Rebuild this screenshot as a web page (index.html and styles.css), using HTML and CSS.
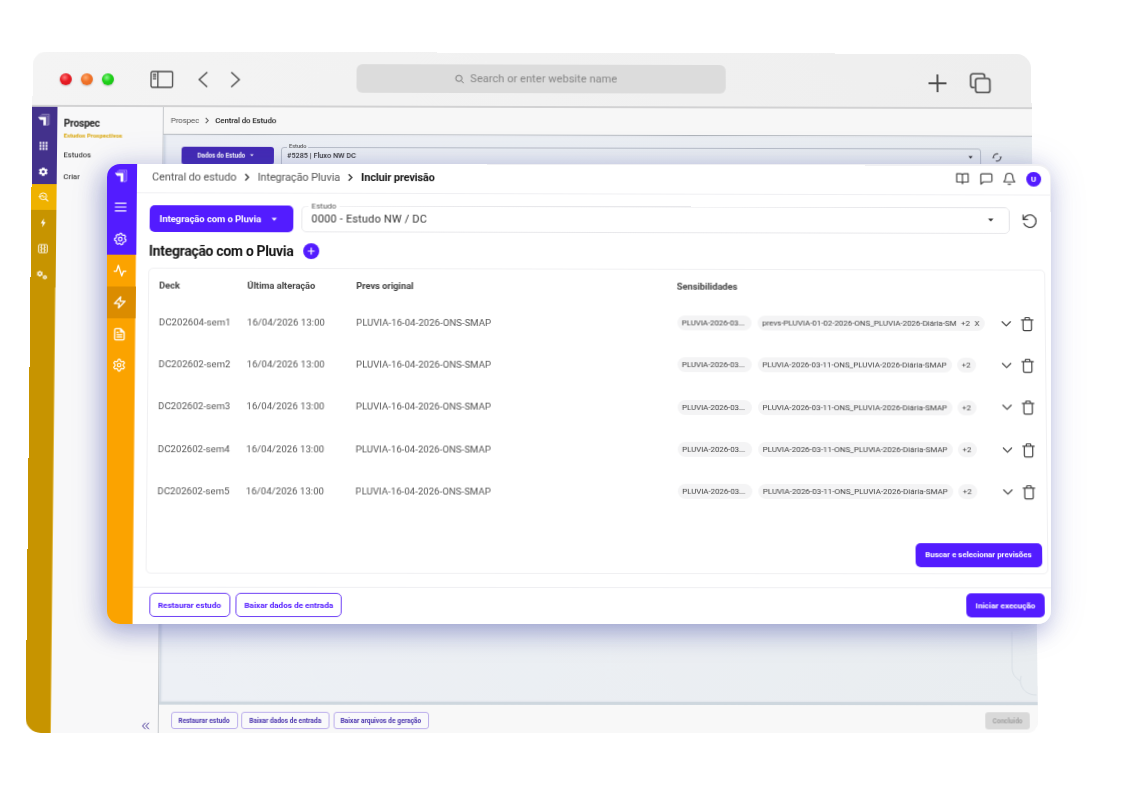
FILE: index.html
```html
<!DOCTYPE html>
<html lang="pt-BR">
<head>
<meta charset="utf-8">
<title>Prospec - Integração com o Pluvia</title>
<link rel="stylesheet" href="styles.css">
</head>
<body>
<svg class="defs" width="0" height="0" aria-hidden="true">
  <defs>
    <symbol id="logo" viewBox="0 0 14 14"><path d="M.8 3.400h8.700v9.200H6.600V6.600H3.200z" fill="#fff"/><path d="M2.800 2.100h8.200v10.100M4.600.8h8.200v10.800L10 12.600" fill="none" stroke="#fff" stroke-width=".6" opacity=".7"/></symbol>
    <symbol id="cog" viewBox="0 0 24 24"><path d="M12 2.200l2 .3.8 2.600 1.500.9 2.600-.7 1.900 2.500-1.200 2.400.1 1.700 2 1.800-1 3-2.700.4-1.200 1.200-.3 2.700-3 1-1.900-2h-1.700l-2.400 1.200-2.500-1.900.7-2.600-.8-1.500-2.600-.8v-3.100l2.500-1 .8-1.600-.6-2.600L7.600 4.200l2.300 1.200z" fill="none" stroke="currentColor" stroke-width="2" stroke-linejoin="round"/><circle cx="12" cy="12.300" r="3.200" fill="none" stroke="currentColor" stroke-width="2"/></symbol>
    <symbol id="cog6" viewBox="0 0 24 24"><path d="M9.600 5.200L10.500 2h3l.9 3.200 1.900 1.100 3.200-.8 1.700 2.900-2.300 2.400v2.400l2.300 2.400-1.700 2.900-3.200-.8-1.900 1.100-.9 3.200h-3l-.9-3.200-1.900-1.100-3.200.8-1.700-2.900 2.300-2.400v-2.400L2.800 8.400l1.700-2.900 3.200.8z" fill="none" stroke="currentColor" stroke-width="2" stroke-linejoin="round"/><circle cx="12" cy="12" r="3" fill="none" stroke="currentColor" stroke-width="2"/></symbol>
    <symbol id="gear" viewBox="0 0 24 24"><path fill="currentColor" fill-rule="evenodd" d="M19.400 13a7.600 7.600 0 0 0 0-2l2.200-1.700-2.100-3.600-2.600 1a7.600 7.600 0 0 0-1.700-1L14.800 3H9.200l-.4 2.700a7.600 7.600 0 0 0-1.700 1l-2.600-1-2.100 3.600L4.600 11a7.600 7.600 0 0 0 0 2l-2.200 1.700 2.100 3.600 2.600-1c.5.400 1.100.7 1.700 1l.4 2.700h5.600l.4-2.700c.6-.3 1.200-.6 1.700-1l2.600 1 2.100-3.600zM12 15.300a3.300 3.300 0 1 1 0-6.600 3.300 3.300 0 0 1 0 6.600z"/></symbol>
    <symbol id="chev-r" viewBox="0 0 8 10"><path d="M2.200 1.300L5.800 5 2.200 8.700" fill="none" stroke="currentColor" stroke-width="1.500"/></symbol>
    <symbol id="chev-d" viewBox="0 0 12 8"><path d="M1.500 1.500L6 6l4.500-4.500" fill="none" stroke="currentColor" stroke-width="1.300" stroke-linecap="round" stroke-linejoin="round"/></symbol>
    <symbol id="caret" viewBox="0 0 6 4"><path d="M.3.5h5.400L3 3.400z" fill="currentColor"/></symbol>
    <symbol id="trash" viewBox="0 0 14 16"><path d="M.9 3.600h12.200M2.500 3.600v10.100c0 .9.5 1.400 1.400 1.400h6.200c.9 0 1.400-.5 1.400-1.400V3.600M4.600 3.400V1.800c0-.5.3-.8.8-.8h3.200c.5 0 .8.300.8.800v1.600" fill="none" stroke="currentColor" stroke-width="1.300" stroke-linecap="round"/></symbol>
  </defs>
</svg>

<div class="scene">
  <div class="browser">
    <div class="toolbar">
      <div class="lights"><i class="red"></i><i class="orange"></i><i class="green"></i></div>
      <svg class="tb-side" viewBox="0 0 24 18"><rect x="1" y="1" width="21.500" height="16" rx="1.500"/><path d="M7.800 1v16M2.800 4h3.400M2.800 6.200h3.400M2.800 8.400h3.400"/></svg>
      <svg class="tb-arrow back" viewBox="0 0 12 18"><path d="M10 1.500L2 9l8 7.500"/></svg>
      <svg class="tb-arrow" viewBox="0 0 12 18"><path d="M2 1.500L10 9l-8 7.500"/></svg>
      <div class="address"><svg viewBox="0 0 10 10"><circle cx="4.200" cy="4.200" r="3.100"/><path d="M6.500 6.500L9 9.100"/></svg><span>Search or enter website name</span></div>
      <svg class="tb-plus" viewBox="0 0 20 20"><path d="M10 1v18M1 10h18"/></svg>
      <svg class="tb-tabs" viewBox="0 0 22 22"><path d="M5.200 15.300H3.600A2.300 2.300 0 0 1 1.300 13V3.600a2.300 2.300 0 0 1 2.300-2.300H13a2.300 2.300 0 0 1 2.300 2.300v1.600"/><rect x="6.200" y="6" width="14.300" height="14.300" rx="2.300"/></svg>
    </div>
    <div class="b-body">
      <nav class="b-rail">
        <span class="b-item"><svg class="s13"><use href="#logo"/></svg></span>
        <span class="b-item"><svg class="s9" viewBox="0 0 9 9" fill="#fff"><path d="M.5.5h2v2h-2zM3.500.5h2v2h-2zM6.500.5h2v2h-2zM.5 3.500h2v2h-2zM3.500 3.500h2v2h-2zM6.500 3.500h2v2h-2zM.5 6.500h2v2h-2zM3.500 6.500h2v2h-2zM6.500 6.500h2v2h-2z"/></svg></span>
        <span class="b-item"><svg class="s11"><use href="#gear"/></svg></span>
        <span class="b-item active"><svg class="s10" viewBox="0 0 10 10" fill="none" stroke="#fff"><circle cx="4.700" cy="4.300" r="3.400" stroke-width=".9"/><path d="M7.100 6.700L9.600 9.400" stroke-width="1.200"/><path d="M.2 4.700h2.500l1.200-1.700 1.400 2.600 1.300-1.500" stroke-width=".8"/></svg></span>
        <span class="b-item gold"><svg class="s10" viewBox="0 0 10 10" fill="#fff"><path d="M5.800.5L2.600 5.600h2L4.200 9.500l3.200-5.300H5.300z"/></svg></span>
        <span class="b-item gold"><svg class="s10" viewBox="0 0 10 10" fill="none" stroke="#fff" stroke-width=".9"><rect x=".7" y="1" width="8.600" height="8" rx=".7"/><path d="M3.600 1v8M6.400 1v8M2 3.500h1.600M2 6.300h1.600M6.400 3.500H8M6.400 6.300H8M3.600 5h2.800" opacity=".85"/></svg></span>
        <span class="b-item gold"><svg class="s11" viewBox="0 0 24 24"><use href="#gear" x="-1" y="1" width="16" height="16"/><use href="#gear" x="12" y="11" width="12" height="12"/></svg></span>
      </nav>
      <aside class="b-menu">
        <h2>Prospec</h2>
        <p class="tagline">Estudos Prospectivos</p>
        <p class="link first">Estudos</p>
        <p class="link">Criar</p>
        <svg class="collapse" viewBox="0 0 8 8"><path d="M3.800.8L1 4l2.800 3.200M7.200.8L4.400 4l2.800 3.200"/></svg>
      </aside>
      <section class="b-main">
        <div class="b-crumbs"><span>Prospec</span><svg><use href="#chev-r"/></svg><b>Central do Estudo</b></div>
        <div class="b-content">
          <div class="b-select-row">
            <button class="b-drop">Dados do Estudo <svg><use href="#caret"/></svg></button>
            <div class="b-select"><label>Estudo</label><span>#5285 | Fluxo NW DC</span><svg><use href="#caret"/></svg></div>
            <svg class="b-sync" viewBox="0 0 10 10"><path d="M1.300 5A3.700 3.700 0 0 1 6.300 1.600M8.700 5A3.700 3.700 0 0 1 3.700 8.400"/><path d="M7.200 4.200h2.800L8.700 6.200zM0 5.800h2.800L1.300 3.900z" fill="#555" stroke="none"/></svg>
          </div>
          <svg class="curl" viewBox="0 0 26 66"><path d="M1 2v36c0 6 3 10 8 13M9 51c1 9 7 14 16 14M9 51l1-5" fill="none" stroke="#dae0e6"/></svg>
        </div>
        <footer class="b-foot">
          <button class="w66">Restaurar estudo</button><button class="w87">Baixar dados de entrada</button><button class="w94">Baixar arquivos de geração</button>
          <button class="done">Concluído</button>
        </footer>
      </section>
    </div>
  </div>

  <div class="panel">
    <div class="sheet">
      <nav class="rail">
        <span class="r-item top"><svg class="s14"><use href="#logo"/></svg></span>
        <span class="r-item indigo"><svg class="s14" viewBox="0 0 14 14" stroke="#fff" stroke-width="1.200"><path d="M1.300 3.200h11.400M1.300 7h11.400M1.300 10.800h11.400"/></svg></span>
        <span class="r-item indigo"><svg class="s14"><use href="#cog"/></svg></span>
        <span class="r-item"><svg class="s14" viewBox="0 0 24 24" fill="none" stroke="#fff" stroke-width="2.200" stroke-linecap="round" stroke-linejoin="round"><path d="M22 13h-4l-3 8L9 3l-3 10H2"/></svg></span>
        <span class="r-item dark"><svg class="s14" viewBox="0 0 24 24" fill="none" stroke="#fff" stroke-width="2.200" stroke-linejoin="round"><path d="M13.500 2.500L3 14h8l-1 7.500L21 10h-8.500z"/></svg></span>
        <span class="r-item"><svg class="s14" viewBox="0 0 24 24" fill="none" stroke="#fff" stroke-width="2.200" stroke-linecap="round" stroke-linejoin="round"><path d="M14 2.500H6a2 2 0 0 0-2 2v15a2 2 0 0 0 2 2h12a2 2 0 0 0 2-2v-11zM14 2.500v6h6M8 13h8M8 17h8M8 9h2"/></svg></span>
        <span class="r-item"><svg class="s14"><use href="#cog6"/></svg></span>
      </nav>
      <main class="main">
        <header class="head">
          <div class="crumbs"><span>Central do estudo</span><svg><use href="#chev-r"/></svg><span>Integração Pluvia</span><svg><use href="#chev-r"/></svg><b>Incluir previsão</b></div>
          <div class="tools">
            <svg viewBox="0 0 24 24"><path d="M12 6v15M12 6c0-1.600-1.200-2.500-3-2.500H2.200V18H9c1.800 0 3 1 3 2.500 0-1.500 1.200-2.500 3-2.500h6.800V3.500H15c-1.800 0-3 .9-3 2.500z"/></svg>
            <svg viewBox="0 0 24 24"><path d="M21.500 15.500a2 2 0 0 1-2 2H7l-4.500 4v-16a2 2 0 0 1 2-2h15a2 2 0 0 1 2 2z"/></svg>
            <svg viewBox="0 0 24 24"><path d="M18 8.500a6 6 0 0 0-12 0c0 6-3.500 9-3.500 9h19S18 14.500 18 8.500M10 21.500h4"/></svg>
            <span class="avatar">U</span>
          </div>
        </header>
        <div class="filters">
          <button class="primary drop">Integração com o Pluvia<svg><use href="#caret"/></svg></button>
          <div class="select"><label>Estudo</label><span>0000 - Estudo NW / DC</span><svg><use href="#caret"/></svg></div>
          <svg class="reload" viewBox="0 0 16 16"><path d="M1.500 2v4.400h4.400M2.100 6.200A6.300 6.300 0 1 1 2.300 10.400"/></svg>
        </div>
        <div class="title"><h1>Integração com o Pluvia</h1><svg viewBox="0 0 16 16"><circle cx="8" cy="8" r="8" fill="#531cff"/><path d="M8 4.600v6.800M4.600 8h6.800" stroke="#fff" stroke-width="1.200"/></svg></div>
        <section class="card">
          <div class="row th"><span>Deck</span><span>Última alteração</span><span>Prevs original</span><span>Sensibilidades</span></div>
          <div class="row"><span class="deck">DC202604-sem1</span><span class="date">16/04/2026 13:00</span><span class="prev">PLUVIA-16-04-2026-ONS-SMAP</span><div class="sens"><span class="chip a">PLUVIA-2026-03...</span><span class="chip wide"><span>prevs-PLUVIA-01-02-2026-ONS_PLUVIA-2026-Diária-SM</span><span>+2</span><span>X</span></span><svg class="cv"><use href="#chev-d"/></svg><svg class="tr"><use href="#trash"/></svg></div></div>
          <div class="row"><span class="deck">DC202602-sem2</span><span class="date">16/04/2026 13:00</span><span class="prev">PLUVIA-16-04-2026-ONS-SMAP</span><div class="sens"><span class="chip a">PLUVIA-2026-03...</span><span class="chip b">PLUVIA-2026-03-11-ONS_PLUVIA-2026-Diária-SMAP</span><span class="chip n">+2</span><svg class="cv"><use href="#chev-d"/></svg><svg class="tr"><use href="#trash"/></svg></div></div>
          <div class="row"><span class="deck">DC202602-sem3</span><span class="date">16/04/2026 13:00</span><span class="prev">PLUVIA-16-04-2026-ONS-SMAP</span><div class="sens"><span class="chip a">PLUVIA-2026-03...</span><span class="chip b">PLUVIA-2026-03-11-ONS_PLUVIA-2026-Diária-SMAP</span><span class="chip n">+2</span><svg class="cv"><use href="#chev-d"/></svg><svg class="tr"><use href="#trash"/></svg></div></div>
          <div class="row"><span class="deck">DC202602-sem4</span><span class="date">16/04/2026 13:00</span><span class="prev">PLUVIA-16-04-2026-ONS-SMAP</span><div class="sens"><span class="chip a">PLUVIA-2026-03...</span><span class="chip b">PLUVIA-2026-03-11-ONS_PLUVIA-2026-Diária-SMAP</span><span class="chip n">+2</span><svg class="cv"><use href="#chev-d"/></svg><svg class="tr"><use href="#trash"/></svg></div></div>
          <div class="row"><span class="deck">DC202602-sem5</span><span class="date">16/04/2026 13:00</span><span class="prev">PLUVIA-16-04-2026-ONS-SMAP</span><div class="sens"><span class="chip a">PLUVIA-2026-03...</span><span class="chip b">PLUVIA-2026-03-11-ONS_PLUVIA-2026-Diária-SMAP</span><span class="chip n">+2</span><svg class="cv"><use href="#chev-d"/></svg><svg class="tr"><use href="#trash"/></svg></div></div>
          <button class="primary search">Buscar e selecionar previsões</button>
        </section>
        <footer class="foot">
          <button class="outline w80">Restaurar estudo</button><button class="outline w105">Baixar dados de entrada</button><button class="primary run">Iniciar execução</button>
        </footer>
      </main>
    </div>
  </div>
</div>
</body>
</html>
```
FILE: styles.css
```css
* { box-sizing: border-box; }
body { margin: 0; background: #fff; font-family: Roboto, "Liberation Sans", sans-serif; color: #222; }
h1, h2, p { margin: 0; }
button { font-family: inherit; margin: 0; padding: 0; border: 0; white-space: nowrap; display: flex; align-items: center; justify-content: center; flex: none; }
svg { flex: none; display: block; }
.defs { position: absolute; }
.scene { position: relative; width: 1130px; height: 788px; overflow: hidden; background: #fff; white-space: nowrap; }
.s9 { width: 9px; height: 9px; }
.s10 { width: 10px; height: 10px; }
.s11 { width: 11px; height: 11px; }
.s13 { width: 13px; height: 13px; }
.s14 { width: 14px; height: 14px; }

/* Browser window behind, seen in slight perspective */
.browser {
  position: absolute; left: 33px; top: 52px; width: 998px; height: 681px;
  display: flex; flex-direction: column; overflow: hidden;
  border-radius: 14px 15px 12px 15px; background: #f7f7f8;
  transform-origin: 0 0;
  transform: matrix3d(1.0029539, 0.0025109, 0, 0.0000029598, -0.0108553, 0.986393, 0, -0.0000210593, 0, 0, 1, 0, 0, -0.5, 0, 1);
}
.toolbar { height: 56px; flex: none; display: flex; align-items: center; padding: 0 40px 0 26.500px; background: linear-gradient(90deg, #f4f4f4, #eee); border-bottom: 2px solid #d2d2d3; }
.toolbar svg { fill: none; stroke: #4a4a4a; }
.lights { display: flex; gap: 9px; width: 90px; flex: none; padding-top: 1px; }
.lights i { width: 12px; height: 12px; border-radius: 50%; box-shadow: 0 1px 2px #0003; }
.red { background: radial-gradient(circle at 40% 35%, #ff7a7a 0, #e81c24 40%, #d4141c); }
.orange { background: radial-gradient(circle at 40% 35%, #ffab70 0, #f0742a 40%, #e5641c); }
.green { background: radial-gradient(circle at 40% 35%, #8cf58c 0, #1fd11a 40%, #17bb12); }
.tb-side { width: 24px; height: 18px; margin-top: 1px; stroke-width: 1.300; }
.tb-arrow { width: 12px; height: 18px; margin-top: 1px; stroke-width: 1.400; }
.tb-arrow.back { margin: 1px 20px 0 23.500px; }
.address { margin-left: 114.500px; width: 369px; height: 29px; border-radius: 6px; background: #dcdcdc; display: flex; align-items: center; justify-content: center; gap: 6px; font-size: 11px; letter-spacing: .05px; color: #858585; padding-right: 10px; margin-top: -1px; }
.address svg { width: 10px; height: 10px; stroke: #777; }
.tb-plus { width: 20px; height: 20px; margin-left: auto; margin-top: 5px; stroke-width: 1.900; }
.tb-tabs { width: 22px; height: 22px; margin-left: 22px; margin-top: 5px; stroke-width: 1.600; }
.b-body { flex: 1; display: flex; min-height: 0; }
.b-rail { width: 25px; flex: none; background: #c79400; border-right: 1px solid #dfb53e; }
.b-item { height: 26px; width: 25px; padding-right: 2px; display: flex; align-items: center; justify-content: center; background: #43318c; color: #fff; }
.b-item.active { background: #efb200; }
.b-item.gold { background: #c79400; }
.b-menu { width: 106px; flex: none; background: #f8f8f9; border-right: 1px solid #c5c8cc; padding: 11px 7px 3px 6.500px; display: flex; flex-direction: column; }
.b-menu h2 { font-size: 10px; line-height: 12px; font-weight: 700; letter-spacing: -.15px; color: #222; }
.tagline { font-size: 6px; line-height: 8px; margin-top: 2px; font-weight: 700; color: #d9a60b; }
.link { font-size: 7.600px; line-height: 10px; margin-top: 12px; font-weight: 500; color: #444; }
.link.first { margin-top: 11px; }
.collapse { width: 8px; height: 8px; margin-top: auto; margin-left: auto; margin-right: 1px; fill: none; stroke: #4b3a9a; }
.b-main { flex: 1; display: flex; flex-direction: column; min-width: 0; }
.b-crumbs { height: 27.500px; flex: none; display: flex; align-items: center; gap: 5px; padding-left: 7px; font-size: 7.900px; letter-spacing: -.1px; color: #555; border-bottom: 1px solid #aeb3b8; background: #f7f7f7; }
.b-crumbs svg { width: 6px; height: 7px; }
.b-crumbs b { font-weight: 500; color: #222; }
.b-content { flex: 1; background: linear-gradient(90deg, #edf0f5, #e9edf0); border-bottom: 3px solid #ced7de; padding: 12px 17px 6px 18px; display: flex; flex-direction: column; box-shadow: inset 2px 0 2px #d3dae2; }
.b-select-row { display: flex; align-items: flex-start; }
.b-drop { width: 92px; height: 18px; background: #442ab5; color: #fff; font-size: 6.300px; font-weight: 700; border-radius: 3px; gap: 5px; padding-right: 4px; }
.b-drop svg { width: 4px; height: 3px; }
.b-select { position: relative; width: 699px; height: 22px; margin-left: 7px; border: 1px solid #b9bfc8; border-radius: 3px; padding: 0 7px 4px 5px; display: flex; align-items: center; font-size: 7.300px; font-weight: 500; color: #333; }
.b-select label { position: absolute; left: 5px; top: -5px; padding: 0 2px; background: #ecf0f4; font-size: 5.600px; color: #555; }
.b-select svg { width: 5px; height: 4px; margin-left: auto; }
.b-sync { width: 10px; height: 10px; margin: 4px 0 0 11px; fill: none; stroke: #555; stroke-width: 1.100; }
.curl { width: 26px; height: 66px; margin: auto -17px 0 auto; }
.b-foot { height: 28px; flex: none; display: flex; align-items: center; padding: 3px 8px 0 11.500px; gap: 3.500px; background: #f8f8f8; }
.b-foot button { height: 17px; border: 1px solid #bdb0ec; border-radius: 3px; font-size: 6.500px; letter-spacing: .02px; font-weight: 700; color: #4b35ae; background: #f9f9fb; }
.b-foot .w66 { width: 66px; }
.b-foot .w87 { width: 87px; }
.b-foot .w94 { width: 94px; }
.b-foot .done { width: 44px; margin-left: auto; background: #d9d9d9; border: 0; color: #a0a0a0; }

/* Front panel */
.panel {
  position: absolute; left: 107px; top: 164px; width: 943.500px; height: 460px;
  border-radius: 13px; overflow: clip; background: #f0f0f3;
  box-shadow: -5px 7px 24px rgba(62, 72, 165, .42), 0 3px 40px rgba(62, 72, 165, .12);
}
.sheet {
  width: 943px; height: 461px; display: flex; background: #fff; border-top-right-radius: 12px;
  transform-origin: 0 0;
  transform: matrix3d(1.004373, 0.0026604, 0, 0.0000046373, -0.0096638, 0.98894, 0, -0.0000216848, 0, 0, 1, 0, 0, -0.5, 0, 1);
}
.rail { width: 29.600px; flex: none; background: #fba300; border-right: 1px solid #ffc766; }
.r-item { height: 31.800px; width: 29.600px; padding-right: 4px; padding-left: 1.500px; display: flex; align-items: center; justify-content: center; color: #fff; }
.r-item.top { height: 28.500px; background: #531cff; padding-bottom: 2px; }
.r-item.indigo { background: #531cff; }
.r-item.dark { background: #db8c00; }
.main { flex: 1; display: flex; flex-direction: column; min-width: 0; }
.head { height: 29.500px; flex: none; display: flex; align-items: center; padding: 0 9px 2px 15.500px; border-bottom: 1px solid #efeff2; }
.crumbs { display: flex; align-items: center; gap: 7px; font-size: 10.900px; letter-spacing: -.09px; color: #555; }
.crumbs svg { width: 7px; height: 9px; color: #333; }
.crumbs b { font-weight: 700; color: #151515; letter-spacing: -.12px; }
.tools { margin-left: auto; display: flex; align-items: center; gap: 9.700px; }
.tools svg { width: 14px; height: 14px; fill: none; stroke: #444; stroke-width: 2; stroke-linejoin: round; stroke-linecap: round; }
.avatar { width: 15px; height: 15px; border-radius: 50%; background: #531cff; color: #fff; font-size: 8px; font-weight: 700; line-height: 15px; text-align: center; }
.filters { display: flex; align-items: center; padding: 12.500px 13px 0 13px; height: 40px; flex: none; }
.primary { background: #531cff; color: #fff; font-weight: 700; border-radius: 5px; }
.drop { width: 143.500px; height: 27px; font-size: 9.500px; letter-spacing: -.08px; gap: 10px; padding-right: 6px; }
.drop svg { width: 6px; height: 4px; }
.select { position: relative; width: 708px; height: 27px; margin-left: 7.500px; border: 1px solid #e8e8eb; border-radius: 5px; display: flex; align-items: center; padding: 0 15px 1px 9.500px; font-size: 10.900px; letter-spacing: .2px; color: #333; }
.select label { position: absolute; left: 6.500px; top: -5px; padding: 0 3px; background: #fff; font-size: 8px; line-height: 10px; letter-spacing: 0; color: #555; }
.select svg { width: 6px; height: 4px; margin-left: auto; }
.reload { width: 16px; height: 16px; margin-left: auto; fill: none; stroke: #444; stroke-width: 1.300; stroke-linecap: round; }
.title { display: flex; align-items: center; gap: 10px; height: 35px; padding: 1px 0 0 13px; flex: none; }
.title h1 { font-size: 13.900px; letter-spacing: -.3px; font-weight: 700; color: #151515; }
.title svg { width: 16px; height: 16px; }
.card { margin: 0 6.500px 0 12.500px; height: 306px; flex: none; border: 1px solid #f0f0f2; border-radius: 5px; display: flex; flex-direction: column; padding: 0 5px 6px 10px; }
.row { height: 42.300px; flex: none; display: grid; grid-template-columns: 87.500px 108.500px 319.500px 1fr; align-items: center; font-size: 9.500px; color: #555; position: relative; }
.th { height: 33px; font-weight: 700; font-size: 9.300px; letter-spacing: -.05px; color: #444; }
.deck, .date, .prev { letter-spacing: .05px; padding-bottom: 1px; }
.sens { display: flex; align-items: center; padding-right: 6px; font-size: 8px; letter-spacing: -.03px; color: #444; }
.chip { height: 15px; border-radius: 8px; background: #f4f4f5; display: flex; align-items: center; justify-content: center; flex: none; }
.chip.a { width: 74px; margin-right: 6px; letter-spacing: -.12px; padding-right: 2px; }
.chip.b { width: 194px; margin-right: 5px; }
.chip.n { width: 19px; }
.chip.wide { width: 227px; gap: 4.500px; letter-spacing: -.05px; }
.cv { width: 11px; height: 8px; margin-left: auto; }
.tr { width: 13px; height: 16px; margin-left: 9px; }
.search { width: 126px; height: 24px; font-size: 7.900px; margin: auto 0 0 auto; }
.foot { margin-top: 13.500px; flex: 1; border-top: 1px solid #efeff2; display: flex; align-items: flex-start; padding: 5px 10px 0 16px; gap: 5.500px; }
.foot button { height: 24px; font-size: 8.100px; font-weight: 700; }
.outline { background: #fff; border: 1px solid #6f42f5; border-radius: 5px; color: #531cff; }
.w80 { width: 80px; }
.w105 { width: 105px; }
.run { width: 78px; margin-left: auto; }
```
